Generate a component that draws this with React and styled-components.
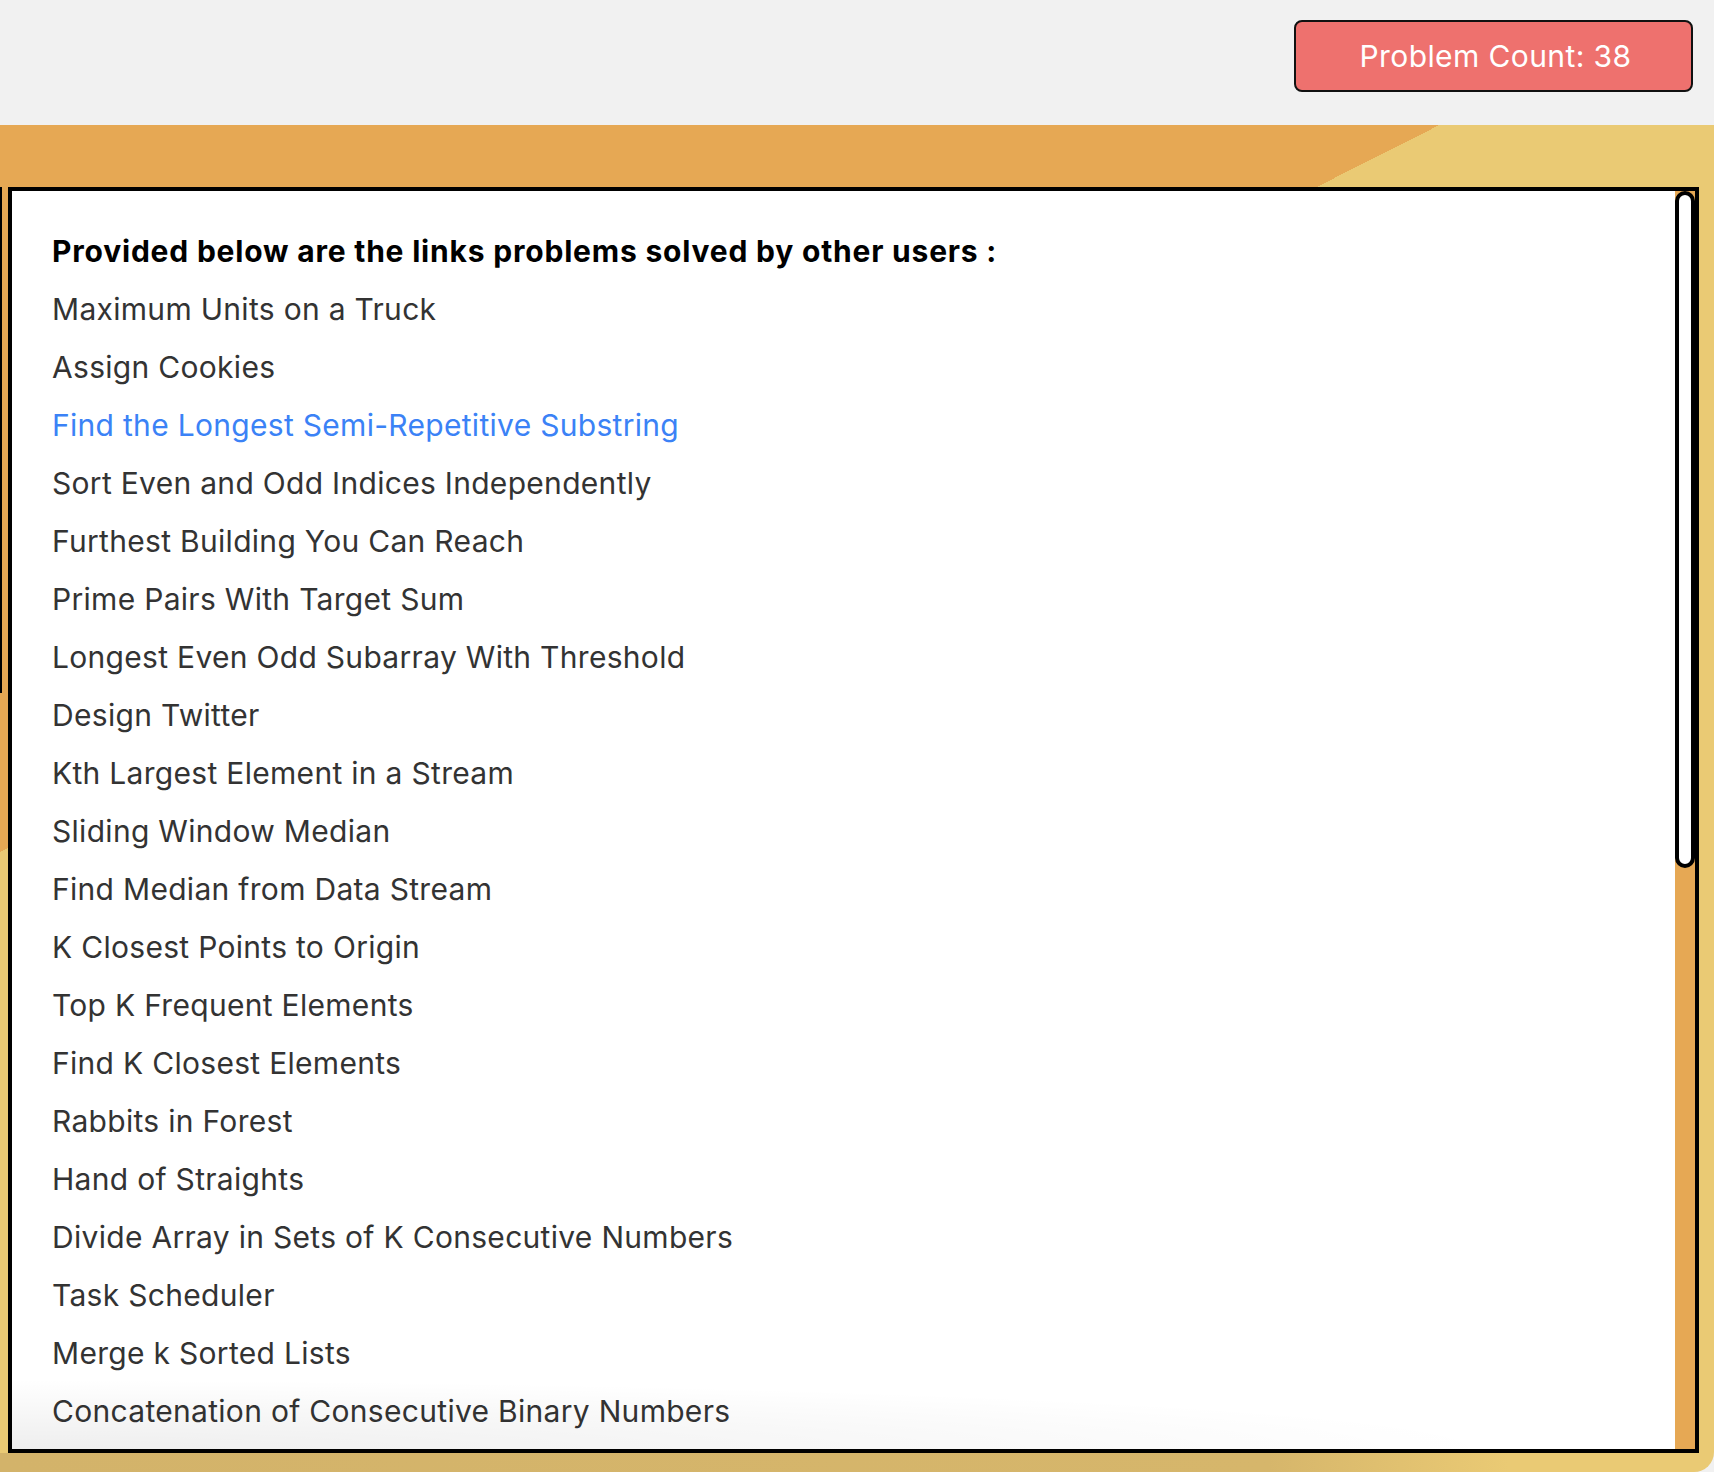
import React from 'react'
import styled, { createGlobalStyle } from 'styled-components'

const GlobalStyle = createGlobalStyle`
  html, body {
    margin: 0;
    padding: 0;
    background: #f1f1f1;
    font-family: Inter, "Noto Sans", "Liberation Sans", sans-serif;
  }
  * { box-sizing: border-box; }
`

let Header = styled.header`
  height: 125px;
  background-color: #f1f1f1;
  display: flex;
  justify-content: flex-end;
  align-items: flex-start;
  padding: 20px 21px 0 0;
`

let CountButton = styled.button`
  width: 399px;
  height: 72px;
  background-color: #ee716e;
  color: white;
  border: 2px solid #111;
  border-radius: 8px;
  font-family: inherit;
  font-size: 30px;
  font-weight: 400;
  letter-spacing: 0.4px;
  padding-left: 10px;
  cursor: pointer;
`

let Band = styled.section`
  position: relative;
  height: 1347px;
  padding: 62px 15px 19px 8px;
  border-bottom-right-radius: 20px;
  background:
    linear-gradient(to right, #d3b36a 0%, #d6b66b 74%, #eaca74 88%) bottom / 100% 19px no-repeat,
    linear-gradient(153.2deg, #e6a854 649px, #eaca74 649px);

  /* stray edge on the far left */
  &::before {
    content: '';
    position: absolute;
    left: 0;
    top: 62px;
    width: 2px;
    height: 506px;
    background: #000;
  }
`

let Panel = styled.div`
  position: relative;
  height: 100%;
  display: flex;
  border: 4px solid #000;
  background-color: white;

  &::after {
    content: '';
    position: absolute;
    left: 0;
    right: 20px;
    bottom: 0;
    height: 70px;
    pointer-events: none;
    background: radial-gradient(ellipse 1500px 70px at 0 100%, rgba(0, 0, 0, 0.065), rgba(0, 0, 0, 0) 100%);
  }
`

let Scroller = styled.div`
  flex: 1;
  height: 100%;
  overflow-y: auto;
  scrollbar-width: none;
  padding: 31px 40px 40px 40px;
`

let Track = styled.div`
  width: 20px;
  flex-shrink: 0;
  background: #e6a854;
`

let Thumb = styled.div`
  height: 677px;
  background: white;
  border: 4px solid #000;
  border-radius: 10px;
`

let Heading = styled.div`
  font-size: 30px;
  font-weight: 700;
  line-height: 58px;
  letter-spacing: 0.8px;
  color: #000;
`

let ProblemLink = styled.a`
  display: block;
  font-size: 30px;
  line-height: 58px;
  letter-spacing: 0.3px;
  color: ${(props) => (props.$active ? '#3b82f6' : '#333')};
  text-decoration: none;
  width: fit-content;
`

const problems = [
  'Maximum Units on a Truck',
  'Assign Cookies',
  'Find the Longest Semi-Repetitive Substring',
  'Sort Even and Odd Indices Independently',
  'Furthest Building You Can Reach',
  'Prime Pairs With Target Sum',
  'Longest Even Odd Subarray With Threshold',
  'Design Twitter',
  'Kth Largest Element in a Stream',
  'Sliding Window Median',
  'Find Median from Data Stream',
  'K Closest Points to Origin',
  'Top K Frequent Elements',
  'Find K Closest Elements',
  'Rabbits in Forest',
  'Hand of Straights',
  'Divide Array in Sets of K Consecutive Numbers',
  'Task Scheduler',
  'Merge k Sorted Lists',
  'Concatenation of Consecutive Binary Numbers',
  'Two Sum',
  'Valid Parentheses',
  'Longest Substring Without Repeating Characters',
  'Container With Most Water',
  'Group Anagrams',
  'Product of Array Except Self',
  'Search in Rotated Sorted Array',
  'Coin Change',
  'Climbing Stairs',
  'House Robber',
  'Number of Islands',
  'Course Schedule',
  'Word Search',
  'Jump Game',
  'Merge Intervals',
  'Rotate Image',
  'Spiral Matrix',
  'Maximum Subarray',
]

function App() {
  return (
    <>
      <GlobalStyle />
      <Header>
        <CountButton>Problem Count: {problems.length}</CountButton>
      </Header>
      <Band>
        <Panel>
          <Scroller>
            <Heading>Provided below are the links problems solved by other users :</Heading>
            {problems.map((name, key) => (
              <ProblemLink key={key} href="#" $active={key === 2}>
                {name}
              </ProblemLink>
            ))}
          </Scroller>
          <Track>
            <Thumb />
          </Track>
        </Panel>
      </Band>
    </>
  )
}

export default App
